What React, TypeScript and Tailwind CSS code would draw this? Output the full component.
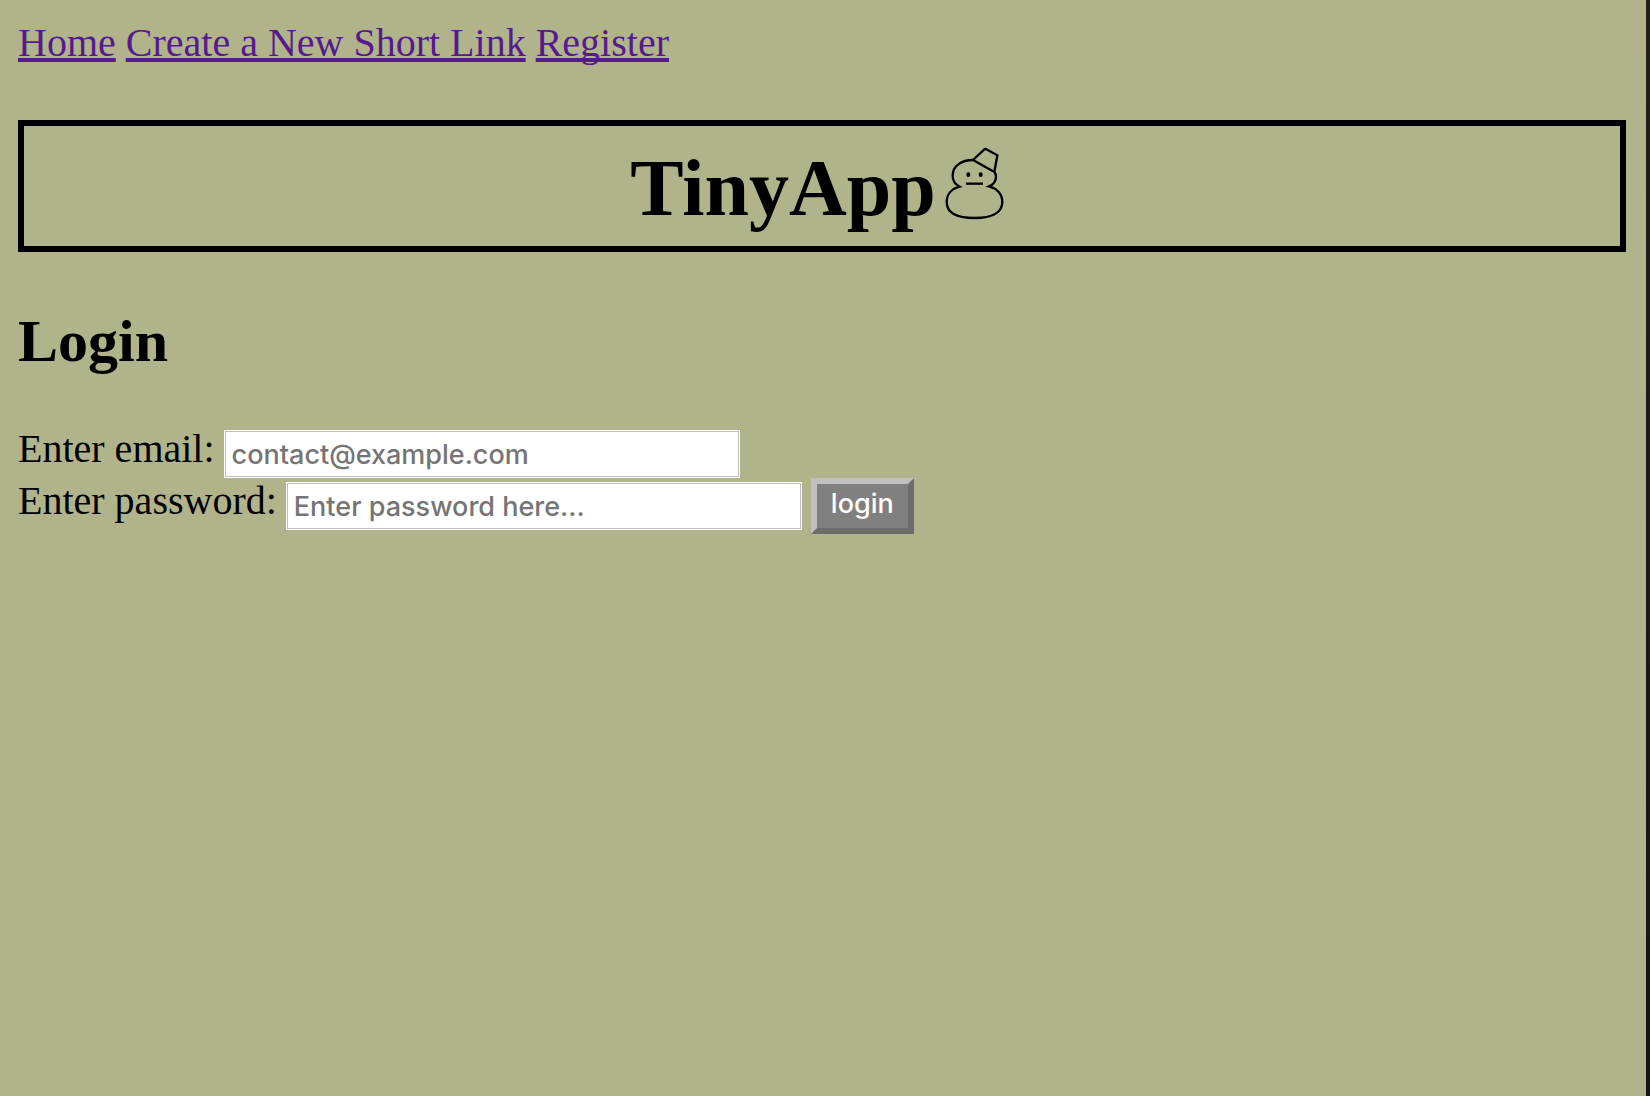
import React from "react";

function Snowman() {
  return (
    <svg
      viewBox="18 18 234 222"
      className="h-[74px] w-[78px] shrink-0"
      fill="none"
      stroke="black"
      strokeWidth="7"
      aria-hidden="true"
    >
      <path d="M129 60C95 60 68 77 68 107C68 121 76 133 89 140C65 146 50 163 50 186C50 224 92 234 134 234C178 234 217 222 217 186C217 163 201 145 177 139C191 133 198 122 198 110C198 104 196 99 193 95" />
      <path d="M129 60L163 28Q166 26 169 28L202 46L193 96Z" />
      <path d="M108 131H159" />
      <ellipse cx="115" cy="104" rx="6" ry="7" fill="black" stroke="none" />
      <ellipse cx="152" cy="104" rx="6" ry="7" fill="black" stroke="none" />
    </svg>
  );
}

const link =
  "text-[#551a8b] underline decoration-4 underline-offset-2 [text-decoration-skip-ink:none]";
const label = "pb-2.5 leading-[38px]";
const field =
  "h-12 w-[516px] min-w-0 border border-white bg-white px-[7px] font-['Inter',sans-serif] text-[27px] font-medium text-black shadow-[inset_0_0_0_1px_#bebebe] placeholder:text-[#757575] placeholder:opacity-100";

export default function App() {
  return (
    <div className="flex min-h-screen bg-[#b1b48b] font-['Liberation_Serif',serif] text-[40px] text-black">
      <div className="min-w-0 flex-1 pt-5 pr-5 pl-[18px]">
        <nav className="flex flex-wrap gap-x-2.5 leading-[46px]">
          <a href="#home" className={link}>Home</a>
          <a href="#new" className={link}>Create a New Short Link</a>
          <a href="#register" className={link}>Register</a>
        </nav>
        <header className="mt-[54px] flex justify-center border-6 border-black pt-4 pb-3">
          <h1 className="flex items-start text-[80px] leading-[92px] font-bold">
            TinyApp
            <span className="pt-1">
              <Snowman />
            </span>
          </h1>
        </header>
        <main>
          <h2 className="mt-[55px] text-[60px] leading-[68px] font-bold">Login</h2>
          <form className="mt-[55px]" onSubmit={(e) => e.preventDefault()}>
            <div className="flex items-center gap-[9px]">
              <label htmlFor="email" className={label}>Enter email:</label>
              <input id="email" type="email" placeholder="contact@example.com" className={field} />
            </div>
            <div className="flex items-center gap-[9px]">
              <label htmlFor="password" className={label}>Enter password:</label>
              <input id="password" type="password" placeholder="Enter password here..." className={field} />
              <button
                type="submit"
                className="border-6 border-t-[#c0c0c0] border-r-[#6c6c6c] border-b-[#6c6c6c] border-l-[#c0c0c0] bg-[#808080] px-3.5 pb-1 font-['Inter',sans-serif] text-[27px] leading-10 font-medium text-white"
              >
                login
              </button>
            </div>
          </form>
        </main>
      </div>
      <div className="w-1 bg-linear-to-b from-[#231f18] to-[#151515]" />
    </div>
  );
}
